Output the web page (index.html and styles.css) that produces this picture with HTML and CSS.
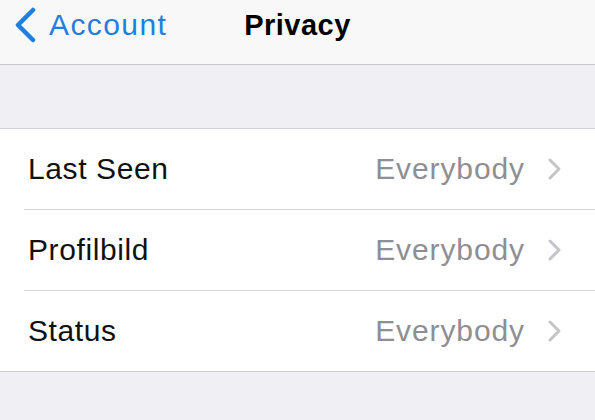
FILE: index.html
```html
<!DOCTYPE html>
<html>
<head>
<meta charset="utf-8">
<link rel="stylesheet" href="styles.css">
</head>
<body>
<header class="nav">
  <div class="back">
    <svg class="back-icon" width="24" height="36" viewBox="0 0 24 36"><path d="M20 3 L5 18 L20 33" fill="none" stroke="#1f7fe0" stroke-width="4.5" stroke-linecap="round" stroke-linejoin="round"/></svg>
    <span class="back-label">Account</span>
  </div>
  <h1 class="title">Privacy</h1>
</header>
<div class="spacer"></div>
<ul class="group">
  <li class="row"><span class="label">Last Seen</span><span class="value">Everybody</span><svg class="chev" width="16" height="24" viewBox="0 0 16 24"><path d="M3 3 L12 12 L3 21" fill="none" stroke="#c4c4c9" stroke-width="3" stroke-linecap="round" stroke-linejoin="round"/></svg></li>
  <li class="row"><span class="label">Profilbild</span><span class="value">Everybody</span><svg class="chev" width="16" height="24" viewBox="0 0 16 24"><path d="M3 3 L12 12 L3 21" fill="none" stroke="#c4c4c9" stroke-width="3" stroke-linecap="round" stroke-linejoin="round"/></svg></li>
  <li class="row"><span class="label">Status</span><span class="value">Everybody</span><svg class="chev" width="16" height="24" viewBox="0 0 16 24"><path d="M3 3 L12 12 L3 21" fill="none" stroke="#c4c4c9" stroke-width="3" stroke-linecap="round" stroke-linejoin="round"/></svg></li>
</ul>
</body>
</html>
```
FILE: styles.css
```css
html, body {
  margin: 0;
  padding: 0;
}
body {
  width: 595px;
  height: 420px;
  overflow: hidden;
  background: #efeff4;
  font-family: "Liberation Sans", Arial, sans-serif;
}
.nav {
  position: relative;
  height: 64px;
  background: #f8f8f8;
  border-bottom: 1px solid #c9c9cc;
  display: flex;
  align-items: center;
  justify-content: center;
}
.back {
  position: absolute;
  left: 13px;
  top: 2px;
  height: 46px;
  display: flex;
  align-items: center;
  gap: 12px;
}
.back-icon {
  display: block;
}
.back-label {
  color: #1f7fe0;
  font-size: 30px;
  letter-spacing: 1.4px;
}
.title {
  margin: 0 0 14px 0;
  font-size: 29px;
  font-weight: bold;
  letter-spacing: 0.5px;
  color: #000;
}
.spacer {
  height: 63px;
}
.group {
  list-style: none;
  margin: 0;
  padding: 0;
  background: #fff;
  border-top: 1px solid #d2d2d6;
  border-bottom: 1px solid #cfcfd3;
}
.row {
  height: 80px;
  display: flex;
  align-items: center;
  padding: 0 32px 0 28px;
  position: relative;
}
.row + .row {
  border-top: 1px solid #d6d6da;
  margin-left: 24px;
  padding-left: 4px;
}
.label {
  flex: 1;
  font-size: 30px;
  letter-spacing: 0.6px;
  color: #111;
}
.value {
  font-size: 30px;
  letter-spacing: 0.9px;
  color: #8e8e93;
  margin-right: 22px;
}
.chev {
  display: block;
}
```
